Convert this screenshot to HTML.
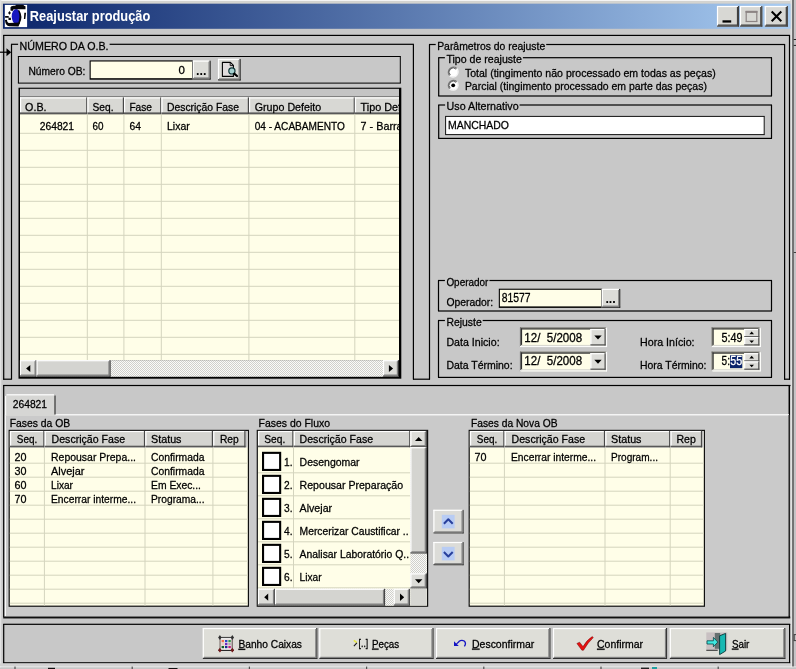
<!DOCTYPE html>
<html lang="pt-BR"><head><meta charset="utf-8"><title>Reajustar produção</title>
<style>html,body{margin:0;padding:0;background:#c8c8c8;overflow:hidden}body{width:796px;height:669px;font-family:"Liberation Sans", sans-serif}svg text{white-space:pre}</style>
</head><body>
<svg width="796" height="669" viewBox="0 0 796 669" font-family='"Liberation Sans", sans-serif' font-size="11" style="display:block;will-change:transform" stroke-linejoin="round">
<rect x="0" y="0" width="796" height="669" fill="#c8c8c8"/>
<rect x="0" y="0" width="796" height="1.2" fill="#f4f4f4"/>
<rect x="0" y="1.2" width="796" height="2.3" fill="#d4d4d0"/>
<rect x="790.4" y="0" width="5.6" height="669" fill="#c6c3c6"/>
<rect x="790.4" y="0" width="1.9" height="669" fill="#e2e2e2"/>
<rect x="792.25" y="0" width="1.5" height="667" fill="#585858"/>
<rect x="793.7" y="39" width="2.3" height="1" fill="#202020"/>
<rect x="793.7" y="44.9" width="2.3" height="1" fill="#202020"/>
<rect x="793.7" y="634.1" width="3.8" height="1" fill="#404040"/>
<rect x="793.7" y="640.1" width="3.8" height="1" fill="#404040"/>
<rect x="793.7" y="634.6" width="1" height="6" fill="#404040"/>
<rect x="796.5" y="634.6" width="1" height="6" fill="#404040"/>
<rect x="793.7" y="252" width="2.3" height="1" fill="#404040"/>
<defs><linearGradient id="tg" x1="0" x2="1" y1="0" y2="0"><stop offset="0" stop-color="#0a246a"/><stop offset="1" stop-color="#a8ccf2"/></linearGradient></defs>
<rect x="3" y="3.7" width="787.6" height="25.1" fill="url(#tg)"/>
<rect x="0" y="0" width="1.3" height="669" fill="#e2e2e2"/>
<rect x="4.8" y="4.9" width="22.3" height="22.2" fill="#ffffff"/>
<g transform="translate(4.7,4.9)"><ellipse cx="11.4" cy="11.6" rx="4.4" ry="7.4" fill="#1818c0"/><path d="M5.8 2.4 Q6.2 0.8 9 0.8 L10.6 0.8 L11.2 -0.2 L18.6 -0.2 L19.4 0.8 L20.8 1.4 L20.8 4.3 L9 4.3 L7.8 6.2 L5.8 5.6 Z" fill="#06060a"/><path d="M14.4 5 Q18.8 11.5 14.8 19 L12.8 19.4 Q16.4 12 13.4 5.6 Z" fill="#06060a"/><path d="M4.8 6.2 L6.2 8 L4.8 9.8 L3.4 8 Z M0.4 11 H4 V12.9 H0.4 Z M3.8 12.8 H6.2 V15.2 H3.8 Z M0.2 15 L2.2 14.8 Q2.4 17.8 4 18 L15.4 17.6 L13.8 21.6 L4.6 21.4 Q0.8 20.6 0.2 15 Z M19.6 7.8 L21.4 7.8 L20.6 14.2 L19.2 14.2 Z" fill="#06060a"/></g>
<text x="29.8" y="20.7" font-size="14" font-weight="bold" fill="#fff" textLength="120.5" lengthAdjust="spacingAndGlyphs">Reajustar produção</text>
<rect x="717" y="6" width="22" height="20.6" fill="#d8d8d4"/>
<rect x="717" y="5.9" width="22" height="1.2" fill="#ffffff"/>
<rect x="716.9" y="6" width="1.2" height="20.6" fill="#ffffff"/>
<rect x="717" y="25.5" width="22" height="1.2" fill="#404040"/>
<rect x="737.9" y="6" width="1.2" height="20.6" fill="#404040"/>
<rect x="718" y="24.5" width="20" height="1.2" fill="#404040"/>
<rect x="736.9" y="7" width="1.2" height="18.6" fill="#404040"/>
<rect x="740" y="6" width="22.3" height="20.6" fill="#d8d8d4"/>
<rect x="740" y="5.9" width="22.3" height="1.2" fill="#ffffff"/>
<rect x="739.9" y="6" width="1.2" height="20.6" fill="#ffffff"/>
<rect x="740" y="25.5" width="22.3" height="1.2" fill="#404040"/>
<rect x="761.2" y="6" width="1.2" height="20.6" fill="#404040"/>
<rect x="741" y="24.5" width="20.3" height="1.2" fill="#404040"/>
<rect x="760.2" y="7" width="1.2" height="18.6" fill="#404040"/>
<rect x="764.8" y="6" width="23" height="20.6" fill="#d8d8d4"/>
<rect x="764.8" y="5.9" width="23" height="1.2" fill="#ffffff"/>
<rect x="764.7" y="6" width="1.2" height="20.6" fill="#ffffff"/>
<rect x="764.8" y="25.5" width="23" height="1.2" fill="#404040"/>
<rect x="786.7" y="6" width="1.2" height="20.6" fill="#404040"/>
<rect x="765.8" y="24.5" width="21" height="1.2" fill="#404040"/>
<rect x="785.7" y="7" width="1.2" height="18.6" fill="#404040"/>
<rect x="722.5" y="20.3" width="8.7" height="2.3" fill="#000"/>
<rect x="745.6" y="10.9" width="11.8" height="1.2" fill="#8c8484"/>
<rect x="745.6" y="20.9" width="11.8" height="1.2" fill="#8c8484"/>
<rect x="745.6" y="11.5" width="1.2" height="10" fill="#8c8484"/>
<rect x="756.2" y="11.5" width="1.2" height="10" fill="#8c8484"/>
<rect x="745.6" y="10.9" width="11.8" height="2" fill="#8c8484"/>
<path d="M771.7 11.5 L781.3 21.3 M781.3 11.5 L771.7 21.3" stroke="#000" stroke-width="2" fill="none"/>
<rect x="3.2" y="34.8" width="786.8" height="1.2" fill="#000"/>
<rect x="3.1" y="35" width="1.2" height="344.7" fill="#000"/>
<rect x="788.9" y="35" width="1.2" height="344.7" fill="#000"/>
<rect x="3.2" y="378.6" width="8.5" height="1.2" fill="#000"/>
<rect x="413" y="378.6" width="17" height="1.2" fill="#000"/>
<rect x="784" y="378.6" width="6" height="1.2" fill="#000"/>
<rect x="11" y="43.7" width="7.1" height="1.2" fill="#000"/>
<rect x="109.6" y="43.7" width="304.3" height="1.2" fill="#000"/>
<rect x="10.9" y="44.3" width="1.2" height="335.2" fill="#000"/>
<rect x="412.8" y="44.3" width="1.2" height="335.2" fill="#000"/>
<text x="19.6" y="49.6" font-size="11.5" stroke="#000" stroke-width="0.28" textLength="89" lengthAdjust="spacingAndGlyphs">NÚMERO DA O.B.</text>
<rect x="0" y="51.6" width="8" height="1.2" fill="#000"/>
<path d="M6.5 48.2 L11.2 52.2 L6.5 56.2 Z" fill="#000"/>
<rect x="17.9" y="56" width="382.9" height="1" fill="#000"/>
<rect x="17.9" y="82.6" width="382.9" height="1" fill="#000"/>
<rect x="17.9" y="56.5" width="1" height="26.6" fill="#000"/>
<rect x="399.8" y="56.5" width="1" height="26.6" fill="#000"/>
<text x="28.4" y="74.6" font-size="11.5" stroke="#000" stroke-width="0.28" textLength="57" lengthAdjust="spacingAndGlyphs">Número OB:</text>
<rect x="89.6" y="60.4" width="103.6" height="19.3" fill="#000"/>
<rect x="90.7" y="61.5" width="101.4" height="16.7" fill="#fffee8"/>
<text x="184.8" y="74.2" font-size="11.5" stroke="#000" stroke-width="0.28" text-anchor="end">0</text>
<rect x="192.8" y="60.6" width="17.8" height="18.9" fill="#dcdcd8"/>
<rect x="192.8" y="60.5" width="17.8" height="1.2" fill="#ffffff"/>
<rect x="192.7" y="60.6" width="1.2" height="18.9" fill="#ffffff"/>
<rect x="192.8" y="78.4" width="17.8" height="1.2" fill="#202020"/>
<rect x="209.5" y="60.6" width="1.2" height="18.9" fill="#202020"/>
<rect x="193.8" y="77.4" width="15.8" height="1.2" fill="#808080"/>
<rect x="208.5" y="61.6" width="1.2" height="16.9" fill="#808080"/>
<text x="196" y="74.8" font-size="12" font-weight="bold" textLength="10.4" lengthAdjust="spacingAndGlyphs">...</text>
<rect x="218" y="58.9" width="22.6" height="21.5" fill="#dcdcd8"/>
<rect x="218" y="58.8" width="22.6" height="1.2" fill="#ffffff"/>
<rect x="217.9" y="58.9" width="1.2" height="21.5" fill="#ffffff"/>
<rect x="218" y="79.3" width="22.6" height="1.2" fill="#202020"/>
<rect x="239.5" y="58.9" width="1.2" height="21.5" fill="#202020"/>
<rect x="219" y="78.3" width="20.6" height="1.2" fill="#808080"/>
<rect x="238.5" y="59.9" width="1.2" height="19.5" fill="#808080"/>
<g><path d="M222.4 62.4 H230.4 L233.4 65.4 V76.4 H222.4 Z" fill="#e0dcdc" stroke="#000" stroke-width="1.1"/><path d="M230.2 62.6 V65.6 H233.2" fill="none" stroke="#000" stroke-width="0.9"/><circle cx="231.9" cy="70.9" r="3.1" fill="#a4d0d0" stroke="#103838" stroke-width="1.2"/><path d="M234.2 73.6 L237 76" stroke="#000" stroke-width="2.2" stroke-linecap="round"/></g>
<rect x="18.5" y="87.7" width="382.8" height="291" fill="#000"/>
<rect x="20" y="88.8" width="379" height="8.6" fill="#c4c4c4"/>
<rect x="20" y="96.6" width="379" height="1" fill="#202020"/>
<rect x="20" y="97.4" width="379" height="17" fill="#fffee8"/>
<rect x="20" y="114.4" width="379" height="246" fill="#fffee8"/>
<clipPath id="gc"><rect x="20" y="88" width="379" height="289"/></clipPath><g clip-path="url(#gc)">
<rect x="20" y="97.4" width="67.4" height="16.6" fill="#d8d8d4"/>
<rect x="20" y="97.3" width="67.4" height="1.2" fill="#ffffff"/>
<rect x="20" y="97.4" width="1.2" height="16.6" fill="#ffffff"/>
<rect x="20" y="112.4" width="67.4" height="1.6" fill="#585858"/>
<rect x="86.2" y="97.4" width="1.2" height="16.6" fill="#484848"/>
<rect x="87.4" y="97.4" width="36.6" height="16.6" fill="#d8d8d4"/>
<rect x="87.4" y="97.3" width="36.6" height="1.2" fill="#ffffff"/>
<rect x="87.4" y="97.4" width="1.2" height="16.6" fill="#ffffff"/>
<rect x="87.4" y="112.4" width="36.6" height="1.6" fill="#585858"/>
<rect x="122.8" y="97.4" width="1.2" height="16.6" fill="#484848"/>
<rect x="124" y="97.4" width="37.4" height="16.6" fill="#d8d8d4"/>
<rect x="124" y="97.3" width="37.4" height="1.2" fill="#ffffff"/>
<rect x="124" y="97.4" width="1.2" height="16.6" fill="#ffffff"/>
<rect x="124" y="112.4" width="37.4" height="1.6" fill="#585858"/>
<rect x="160.2" y="97.4" width="1.2" height="16.6" fill="#484848"/>
<rect x="161.4" y="97.4" width="87.6" height="16.6" fill="#d8d8d4"/>
<rect x="161.4" y="97.3" width="87.6" height="1.2" fill="#ffffff"/>
<rect x="161.4" y="97.4" width="1.2" height="16.6" fill="#ffffff"/>
<rect x="161.4" y="112.4" width="87.6" height="1.6" fill="#585858"/>
<rect x="247.8" y="97.4" width="1.2" height="16.6" fill="#484848"/>
<rect x="249" y="97.4" width="105.9" height="16.6" fill="#d8d8d4"/>
<rect x="249" y="97.3" width="105.9" height="1.2" fill="#ffffff"/>
<rect x="249" y="97.4" width="1.2" height="16.6" fill="#ffffff"/>
<rect x="249" y="112.4" width="105.9" height="1.6" fill="#585858"/>
<rect x="353.7" y="97.4" width="1.2" height="16.6" fill="#484848"/>
<rect x="354.9" y="97.4" width="54.1" height="16.6" fill="#d8d8d4"/>
<rect x="354.9" y="97.3" width="54.1" height="1.2" fill="#ffffff"/>
<rect x="354.9" y="97.4" width="1.2" height="16.6" fill="#ffffff"/>
<rect x="354.9" y="112.4" width="54.1" height="1.6" fill="#585858"/>
<rect x="407.8" y="97.4" width="1.2" height="16.6" fill="#484848"/>
<rect x="20" y="132.8" width="379" height="1" fill="#d4d4be"/>
<rect x="20" y="149.8" width="379" height="1" fill="#d4d4be"/>
<rect x="20" y="166.8" width="379" height="1" fill="#d4d4be"/>
<rect x="20" y="183.8" width="379" height="1" fill="#d4d4be"/>
<rect x="20" y="200.8" width="379" height="1" fill="#d4d4be"/>
<rect x="20" y="217.8" width="379" height="1" fill="#d4d4be"/>
<rect x="20" y="234.8" width="379" height="1" fill="#d4d4be"/>
<rect x="20" y="251.8" width="379" height="1" fill="#d4d4be"/>
<rect x="20" y="268.8" width="379" height="1" fill="#d4d4be"/>
<rect x="20" y="285.8" width="379" height="1" fill="#d4d4be"/>
<rect x="20" y="302.8" width="379" height="1" fill="#d4d4be"/>
<rect x="20" y="319.8" width="379" height="1" fill="#d4d4be"/>
<rect x="20" y="336.8" width="379" height="1" fill="#d4d4be"/>
<rect x="20" y="353.8" width="379" height="1" fill="#d4d4be"/>
<rect x="86.8" y="114.4" width="1" height="245.6" fill="#d4d4be"/>
<rect x="123.4" y="114.4" width="1" height="245.6" fill="#d4d4be"/>
<rect x="160.8" y="114.4" width="1" height="245.6" fill="#d4d4be"/>
<rect x="248.4" y="114.4" width="1" height="245.6" fill="#d4d4be"/>
<rect x="354.3" y="114.4" width="1" height="245.6" fill="#d4d4be"/>
<text x="25.1" y="110.8" font-size="11.5" stroke="#000" stroke-width="0.28" textLength="21.4" lengthAdjust="spacingAndGlyphs">O.B.</text>
<text x="92.5" y="110.8" font-size="11.5" stroke="#000" stroke-width="0.28" textLength="21" lengthAdjust="spacingAndGlyphs">Seq.</text>
<text x="129.4" y="110.8" font-size="11.5" stroke="#000" stroke-width="0.28" textLength="22.6" lengthAdjust="spacingAndGlyphs">Fase</text>
<text x="167" y="110.8" font-size="11.5" stroke="#000" stroke-width="0.28" textLength="72" lengthAdjust="spacingAndGlyphs">Descrição Fase</text>
<text x="254.7" y="110.8" font-size="11.5" stroke="#000" stroke-width="0.28" textLength="66.6" lengthAdjust="spacingAndGlyphs">Grupo Defeito</text>
<text x="360.6" y="110.8" font-size="11.5" stroke="#000" stroke-width="0.28" textLength="58" lengthAdjust="spacingAndGlyphs">Tipo Defeito</text>
<text x="39.7" y="130" font-size="11.5" stroke="#000" stroke-width="0.28" textLength="34.4" lengthAdjust="spacingAndGlyphs">264821</text>
<text x="92.5" y="130" font-size="11.5" stroke="#000" stroke-width="0.28" textLength="11" lengthAdjust="spacingAndGlyphs">60</text>
<text x="129.4" y="130" font-size="11.5" stroke="#000" stroke-width="0.28" textLength="11.5" lengthAdjust="spacingAndGlyphs">64</text>
<text x="167" y="130" font-size="11.5" stroke="#000" stroke-width="0.28" textLength="22.7" lengthAdjust="spacingAndGlyphs">Lixar</text>
<text x="254.7" y="130" font-size="11.5" stroke="#000" stroke-width="0.28" textLength="90.2" lengthAdjust="spacingAndGlyphs">04 - ACABAMENTO</text>
<text x="360.6" y="130" font-size="11.5" stroke="#000" stroke-width="0.28" textLength="72" lengthAdjust="spacingAndGlyphs">7 - Barramento</text>
</g>
<pattern id="dz" width="2" height="2" patternUnits="userSpaceOnUse"><rect width="2" height="2" fill="#fafaf8"/><rect width="1" height="1" fill="#d0d0cc"/><rect x="1" y="1" width="1" height="1" fill="#d0d0cc"/></pattern>
<rect x="20" y="360.2" width="379" height="16.6" fill="url(#dz)"/>
<rect x="20" y="360.2" width="16.6" height="16.4" fill="#dcdcd8"/>
<rect x="20" y="360.1" width="16.6" height="1.2" fill="#ffffff"/>
<rect x="19.9" y="360.2" width="1.2" height="16.4" fill="#ffffff"/>
<rect x="20" y="375.5" width="16.6" height="1.2" fill="#303030"/>
<rect x="35.5" y="360.2" width="1.2" height="16.4" fill="#303030"/>
<rect x="21" y="374.5" width="14.6" height="1.2" fill="#808080"/>
<rect x="34.5" y="361.2" width="1.2" height="14.4" fill="#808080"/>
<rect x="36.6" y="360.2" width="73.9" height="16.4" fill="#d4d4d0"/>
<rect x="36.6" y="360.1" width="73.9" height="1.2" fill="#ffffff"/>
<rect x="36.5" y="360.2" width="1.2" height="16.4" fill="#ffffff"/>
<rect x="36.6" y="375.5" width="73.9" height="1.2" fill="#303030"/>
<rect x="109.4" y="360.2" width="1.2" height="16.4" fill="#303030"/>
<rect x="37.6" y="374.5" width="71.9" height="1.2" fill="#808080"/>
<rect x="108.4" y="361.2" width="1.2" height="14.4" fill="#808080"/>
<rect x="383" y="360.2" width="15.9" height="16.4" fill="#dcdcd8"/>
<rect x="383" y="360.1" width="15.9" height="1.2" fill="#ffffff"/>
<rect x="382.9" y="360.2" width="1.2" height="16.4" fill="#ffffff"/>
<rect x="383" y="375.5" width="15.9" height="1.2" fill="#303030"/>
<rect x="397.8" y="360.2" width="1.2" height="16.4" fill="#303030"/>
<rect x="384" y="374.5" width="13.9" height="1.2" fill="#808080"/>
<rect x="396.8" y="361.2" width="1.2" height="14.4" fill="#808080"/>
<path d="M30.3 364.9 L26.1 368.5 L30.3 372.1 Z M388.9 364.9 L393.1 368.5 L388.9 372.1 Z" fill="#000"/>
<rect x="429" y="43.9" width="6.7" height="1.2" fill="#000"/>
<rect x="546.2" y="43.9" width="238.9" height="1.2" fill="#000"/>
<rect x="428.9" y="44.5" width="1.2" height="335" fill="#000"/>
<rect x="784" y="44.5" width="1.2" height="335" fill="#000"/>
<text x="437.2" y="49.8" font-size="11.5" stroke="#000" stroke-width="0.28" textLength="108" lengthAdjust="spacingAndGlyphs">Parâmetros do reajuste</text>
<rect x="438.2" y="57.1" width="6.7" height="1.2" fill="#000"/>
<rect x="522.9" y="57.1" width="249.1" height="1.2" fill="#000"/>
<rect x="438.1" y="57.7" width="1.2" height="38.3" fill="#000"/>
<rect x="770.9" y="57.7" width="1.2" height="38.3" fill="#000"/>
<rect x="438.2" y="95.4" width="333.8" height="1.2" fill="#000"/>
<text x="446.4" y="63" font-size="11.5" stroke="#000" stroke-width="0.28" textLength="75.5" lengthAdjust="spacingAndGlyphs">Tipo de reajuste</text>
<rect x="438.2" y="104.4" width="6.9" height="1.2" fill="#000"/>
<rect x="519.6" y="104.4" width="252.4" height="1.2" fill="#000"/>
<rect x="438.1" y="105" width="1.2" height="33.4" fill="#000"/>
<rect x="770.9" y="105" width="1.2" height="33.4" fill="#000"/>
<rect x="438.2" y="137.8" width="333.8" height="1.2" fill="#000"/>
<text x="446.6" y="109.6" font-size="11.5" stroke="#000" stroke-width="0.28" textLength="72" lengthAdjust="spacingAndGlyphs">Uso Alternativo</text>
<circle cx="453.2" cy="72.1" r="4.6" fill="#fff"/>
<path d="M449.6 75.7 A5.1 5.1 0 0 1 456.8 68.5" stroke="#787878" stroke-width="1.2" fill="none"/>
<path d="M450.3 75 A4.1 4.1 0 0 1 456.1 69.2" stroke="#383838" stroke-width="0.8" fill="none"/>
<path d="M449.6 75.7 A5.1 5.1 0 0 0 456.8 68.5" stroke="#f4f4f4" stroke-width="1.3" fill="none"/>
<circle cx="453.2" cy="85.3" r="4.6" fill="#fff"/>
<path d="M449.6 88.9 A5.1 5.1 0 0 1 456.8 81.7" stroke="#787878" stroke-width="1.2" fill="none"/>
<path d="M450.3 88.2 A4.1 4.1 0 0 1 456.1 82.4" stroke="#383838" stroke-width="0.8" fill="none"/>
<path d="M449.6 88.9 A5.1 5.1 0 0 0 456.8 81.7" stroke="#f4f4f4" stroke-width="1.3" fill="none"/>
<circle cx="453.2" cy="85.3" r="1.9" fill="#000"/>
<text x="464.9" y="76.6" font-size="11.5" stroke="#000" stroke-width="0.28" textLength="250.8" lengthAdjust="spacingAndGlyphs">Total (tingimento não processado em todas as peças)</text>
<text x="464.9" y="89.7" font-size="11.5" stroke="#000" stroke-width="0.28" textLength="242" lengthAdjust="spacingAndGlyphs">Parcial (tingimento processado em parte das peças)</text>
<rect x="445.2" y="116" width="319.3" height="19" fill="#ffffff"/>
<rect x="445.1" y="115.9" width="319.6" height="1" fill="#101010"/>
<rect x="445.1" y="134.1" width="319.6" height="1" fill="#101010"/>
<rect x="445.1" y="116.4" width="1" height="18.2" fill="#101010"/>
<rect x="763.7" y="116.4" width="1" height="18.2" fill="#101010"/>
<text x="448" y="128.7" font-size="11.5" stroke="#000" stroke-width="0.28" textLength="61" lengthAdjust="spacingAndGlyphs">MANCHADO</text>
<rect x="438" y="279.9" width="6.9" height="1.2" fill="#000"/>
<rect x="489.4" y="279.9" width="282.6" height="1.2" fill="#000"/>
<rect x="437.9" y="280.5" width="1.2" height="30.5" fill="#000"/>
<rect x="770.9" y="280.5" width="1.2" height="30.5" fill="#000"/>
<rect x="438" y="310.4" width="334" height="1.2" fill="#000"/>
<text x="446.4" y="285.8" font-size="11.5" stroke="#000" stroke-width="0.28" textLength="42" lengthAdjust="spacingAndGlyphs">Operador</text>
<text x="446.4" y="305.8" font-size="11.5" stroke="#000" stroke-width="0.28" textLength="46.8" lengthAdjust="spacingAndGlyphs">Operador:</text>
<rect x="498.8" y="288.7" width="103.6" height="19.2" fill="#000"/>
<rect x="499.9" y="289.8" width="101.4" height="16.6" fill="#fffee8"/>
<text x="501.7" y="301.9" font-size="12" stroke="#000" stroke-width="0.28" textLength="28.8" lengthAdjust="spacingAndGlyphs">81577</text>
<rect x="601.8" y="288.9" width="18.4" height="18.8" fill="#dcdcd8"/>
<rect x="601.8" y="288.8" width="18.4" height="1.2" fill="#ffffff"/>
<rect x="601.7" y="288.9" width="1.2" height="18.8" fill="#ffffff"/>
<rect x="601.8" y="306.6" width="18.4" height="1.2" fill="#202020"/>
<rect x="619.1" y="288.9" width="1.2" height="18.8" fill="#202020"/>
<rect x="602.8" y="305.6" width="16.4" height="1.2" fill="#808080"/>
<rect x="618.1" y="289.9" width="1.2" height="16.8" fill="#808080"/>
<text x="605.4" y="303.2" font-size="12" font-weight="bold" textLength="10.4" lengthAdjust="spacingAndGlyphs">...</text>
<rect x="438" y="319.9" width="6.9" height="1.2" fill="#000"/>
<rect x="482.7" y="319.9" width="289.3" height="1.2" fill="#000"/>
<rect x="437.9" y="320.5" width="1.2" height="56.9" fill="#000"/>
<rect x="770.9" y="320.5" width="1.2" height="56.9" fill="#000"/>
<rect x="438" y="376.8" width="334" height="1.2" fill="#000"/>
<text x="446.4" y="325.8" font-size="11.5" stroke="#000" stroke-width="0.28" textLength="35.3" lengthAdjust="spacingAndGlyphs">Rejuste</text>
<text x="446.4" y="345.8" font-size="11.5" stroke="#000" stroke-width="0.28" textLength="53.2" lengthAdjust="spacingAndGlyphs">Data Inicio:</text>
<text x="446.4" y="369" font-size="11.5" stroke="#000" stroke-width="0.28" textLength="66.2" lengthAdjust="spacingAndGlyphs">Data Término:</text>
<text x="640" y="345.7" font-size="11.5" stroke="#000" stroke-width="0.28" textLength="54.6" lengthAdjust="spacingAndGlyphs">Hora Início:</text>
<text x="640" y="369.2" font-size="11.5" stroke="#000" stroke-width="0.28" textLength="66.4" lengthAdjust="spacingAndGlyphs">Hora Término:</text>
<rect x="520" y="327.4" width="87" height="19.6" fill="#fffee8"/>
<rect x="520" y="327.3" width="87" height="1.2" fill="#707070"/>
<rect x="519.9" y="327.4" width="1.2" height="19.6" fill="#707070"/>
<rect x="521" y="328.3" width="85" height="1.2" fill="#303030"/>
<rect x="520.9" y="328.4" width="1.2" height="17.6" fill="#303030"/>
<rect x="520" y="345.9" width="87" height="1.2" fill="#ffffff"/>
<rect x="605.9" y="327.4" width="1.2" height="19.6" fill="#ffffff"/>
<rect x="521" y="344.9" width="85" height="1.2" fill="#d8d8d0"/>
<rect x="604.9" y="328.4" width="1.2" height="17.6" fill="#d8d8d0"/>
<text x="524.3" y="341.6" font-size="12" stroke="#000" stroke-width="0.28" textLength="57.8" lengthAdjust="spacingAndGlyphs" xml:space="preserve">12/  5/2008</text>
<rect x="590.4" y="329" width="15.2" height="16.4" fill="#dcdcd8"/>
<rect x="590.4" y="328.9" width="15.2" height="1.2" fill="#ffffff"/>
<rect x="590.3" y="329" width="1.2" height="16.4" fill="#ffffff"/>
<rect x="590.4" y="344.3" width="15.2" height="1.2" fill="#505050"/>
<rect x="604.5" y="329" width="1.2" height="16.4" fill="#505050"/>
<path d="M594.3 335.6 H601.7 L598 339.6 Z" fill="#000"/>
<rect x="711.6" y="327.4" width="49.1" height="19.6" fill="#fffee8"/>
<rect x="711.6" y="327.3" width="49.1" height="1.2" fill="#707070"/>
<rect x="711.5" y="327.4" width="1.2" height="19.6" fill="#707070"/>
<rect x="712.6" y="328.3" width="47.1" height="1.2" fill="#303030"/>
<rect x="712.5" y="328.4" width="1.2" height="17.6" fill="#303030"/>
<rect x="711.6" y="345.9" width="49.1" height="1.2" fill="#ffffff"/>
<rect x="759.6" y="327.4" width="1.2" height="19.6" fill="#ffffff"/>
<rect x="712.6" y="344.9" width="47.1" height="1.2" fill="#d8d8d0"/>
<rect x="758.6" y="328.4" width="1.2" height="17.6" fill="#d8d8d0"/>
<rect x="744.2" y="329" width="15.1" height="8.2" fill="#dcdcd8"/>
<rect x="744.2" y="328.9" width="15.1" height="1.2" fill="#ffffff"/>
<rect x="744.1" y="329" width="1.2" height="8.2" fill="#ffffff"/>
<rect x="744.2" y="336.1" width="15.1" height="1.2" fill="#505050"/>
<rect x="758.2" y="329" width="1.2" height="8.2" fill="#505050"/>
<rect x="744.2" y="337.2" width="15.1" height="8.2" fill="#dcdcd8"/>
<rect x="744.2" y="337.1" width="15.1" height="1.2" fill="#ffffff"/>
<rect x="744.1" y="337.2" width="1.2" height="8.2" fill="#ffffff"/>
<rect x="744.2" y="344.3" width="15.1" height="1.2" fill="#505050"/>
<rect x="758.2" y="337.2" width="1.2" height="8.2" fill="#505050"/>
<path d="M749.4 334.2 H754 L751.7 331.6 Z M749.4 340.4 H754 L751.7 343 Z" fill="#000"/>
<rect x="520" y="351.6" width="87" height="19.7" fill="#fffee8"/>
<rect x="520" y="351.5" width="87" height="1.2" fill="#707070"/>
<rect x="519.9" y="351.6" width="1.2" height="19.7" fill="#707070"/>
<rect x="521" y="352.5" width="85" height="1.2" fill="#303030"/>
<rect x="520.9" y="352.6" width="1.2" height="17.7" fill="#303030"/>
<rect x="520" y="370.2" width="87" height="1.2" fill="#ffffff"/>
<rect x="605.9" y="351.6" width="1.2" height="19.7" fill="#ffffff"/>
<rect x="521" y="369.2" width="85" height="1.2" fill="#d8d8d0"/>
<rect x="604.9" y="352.6" width="1.2" height="17.7" fill="#d8d8d0"/>
<text x="524.3" y="365.4" font-size="12" stroke="#000" stroke-width="0.28" textLength="57.8" lengthAdjust="spacingAndGlyphs" xml:space="preserve">12/  5/2008</text>
<rect x="590.4" y="353.2" width="15.2" height="16.5" fill="#dcdcd8"/>
<rect x="590.4" y="353.1" width="15.2" height="1.2" fill="#ffffff"/>
<rect x="590.3" y="353.2" width="1.2" height="16.5" fill="#ffffff"/>
<rect x="590.4" y="368.6" width="15.2" height="1.2" fill="#505050"/>
<rect x="604.5" y="353.2" width="1.2" height="16.5" fill="#505050"/>
<path d="M594.3 359.85 H601.7 L598 363.85 Z" fill="#000"/>
<rect x="711.6" y="351.6" width="49.1" height="19.7" fill="#fffee8"/>
<rect x="711.6" y="351.5" width="49.1" height="1.2" fill="#707070"/>
<rect x="711.5" y="351.6" width="1.2" height="19.7" fill="#707070"/>
<rect x="712.6" y="352.5" width="47.1" height="1.2" fill="#303030"/>
<rect x="712.5" y="352.6" width="1.2" height="17.7" fill="#303030"/>
<rect x="711.6" y="370.2" width="49.1" height="1.2" fill="#ffffff"/>
<rect x="759.6" y="351.6" width="1.2" height="19.7" fill="#ffffff"/>
<rect x="712.6" y="369.2" width="47.1" height="1.2" fill="#d8d8d0"/>
<rect x="758.6" y="352.6" width="1.2" height="17.7" fill="#d8d8d0"/>
<rect x="744.2" y="353.2" width="15.1" height="8.25" fill="#dcdcd8"/>
<rect x="744.2" y="353.1" width="15.1" height="1.2" fill="#ffffff"/>
<rect x="744.1" y="353.2" width="1.2" height="8.25" fill="#ffffff"/>
<rect x="744.2" y="360.35" width="15.1" height="1.2" fill="#505050"/>
<rect x="758.2" y="353.2" width="1.2" height="8.25" fill="#505050"/>
<rect x="744.2" y="361.45" width="15.1" height="8.25" fill="#dcdcd8"/>
<rect x="744.2" y="361.35" width="15.1" height="1.2" fill="#ffffff"/>
<rect x="744.1" y="361.45" width="1.2" height="8.25" fill="#ffffff"/>
<rect x="744.2" y="368.6" width="15.1" height="1.2" fill="#505050"/>
<rect x="758.2" y="361.45" width="1.2" height="8.25" fill="#505050"/>
<path d="M749.4 358.45 H754 L751.7 355.85 Z M749.4 364.65 H754 L751.7 367.25 Z" fill="#000"/>
<text x="721.6" y="341.6" font-size="12" stroke="#000" stroke-width="0.28" textLength="21" lengthAdjust="spacingAndGlyphs">5:49</text>
<text x="721.6" y="365.4" font-size="12" stroke="#000" stroke-width="0.28" textLength="8.4" lengthAdjust="spacingAndGlyphs">5:</text>
<rect x="730" y="355.3" width="12.3" height="12.9" fill="#0a246a"/>
<text x="730.2" y="365.4" font-size="12" fill="#fff" stroke="#fff" stroke-width="0.28" textLength="12" lengthAdjust="spacingAndGlyphs">55</text>
<rect x="3.2" y="384.9" width="787.3" height="1.2" fill="#000"/>
<rect x="3.1" y="385" width="1.2" height="232" fill="#000"/>
<rect x="788.55" y="385" width="1.5" height="233" fill="#000"/>
<rect x="3.2" y="616.55" width="787" height="1.9" fill="#101010"/>
<rect x="5" y="415" width="784" height="200.5" fill="#cacaca"/>
<rect x="5" y="414.2" width="784" height="1.2" fill="#ffffff"/>
<rect x="4.9" y="414.5" width="1" height="201.5" fill="#ffffff"/>
<rect x="788.2" y="415" width="1.2" height="201" fill="#606060"/>
<rect x="5.5" y="395" width="49.5" height="21" fill="#d6d6d4"/>
<rect x="6.5" y="394.2" width="47.5" height="1.2" fill="#ffffff"/>
<rect x="5.05" y="396" width="1.1" height="19.5" fill="#ffffff"/>
<rect x="54.35" y="395.5" width="1.3" height="19" fill="#404040"/>
<text x="12.7" y="407.6" font-size="11.5" stroke="#000" stroke-width="0.28" textLength="34.4" lengthAdjust="spacingAndGlyphs">264821</text>
<text x="9.7" y="426.7" font-size="11.5" stroke="#000" stroke-width="0.28" textLength="60.5" lengthAdjust="spacingAndGlyphs">Fases da OB</text>
<text x="258.5" y="426.7" font-size="11.5" stroke="#000" stroke-width="0.28" textLength="71.5" lengthAdjust="spacingAndGlyphs">Fases do Fluxo</text>
<text x="471" y="426.7" font-size="11.5" stroke="#000" stroke-width="0.28" textLength="86.5" lengthAdjust="spacingAndGlyphs">Fases da Nova OB</text>
<rect x="8.6" y="429.8" width="240.4" height="177" fill="#101010"/>
<rect x="9.8" y="431" width="238" height="174.6" fill="#fffee8"/>
<rect x="9.8" y="431" width="238" height="16.4" fill="#c8c8c8"/>
<rect x="10" y="431" width="34.5" height="16.3" fill="#d4d4d0"/>
<rect x="10" y="430.9" width="34.5" height="1.2" fill="#ffffff"/>
<rect x="10" y="431" width="1.2" height="16.3" fill="#ffffff"/>
<rect x="10" y="445.7" width="34.5" height="1.6" fill="#585858"/>
<rect x="43.3" y="431" width="1.2" height="16.3" fill="#484848"/>
<rect x="44.7" y="431" width="100.4" height="16.3" fill="#d4d4d0"/>
<rect x="44.7" y="430.9" width="100.4" height="1.2" fill="#ffffff"/>
<rect x="44.7" y="431" width="1.2" height="16.3" fill="#ffffff"/>
<rect x="44.7" y="445.7" width="100.4" height="1.6" fill="#585858"/>
<rect x="143.9" y="431" width="1.2" height="16.3" fill="#484848"/>
<rect x="145.3" y="431" width="67.7" height="16.3" fill="#d4d4d0"/>
<rect x="145.3" y="430.9" width="67.7" height="1.2" fill="#ffffff"/>
<rect x="145.3" y="431" width="1.2" height="16.3" fill="#ffffff"/>
<rect x="145.3" y="445.7" width="67.7" height="1.6" fill="#585858"/>
<rect x="211.8" y="431" width="1.2" height="16.3" fill="#484848"/>
<rect x="213.2" y="431" width="32.3" height="16.3" fill="#d4d4d0"/>
<rect x="213.2" y="430.9" width="32.3" height="1.2" fill="#ffffff"/>
<rect x="213.2" y="431" width="1.2" height="16.3" fill="#ffffff"/>
<rect x="213.2" y="445.7" width="32.3" height="1.6" fill="#585858"/>
<rect x="244.3" y="431" width="1.2" height="16.3" fill="#484848"/>
<rect x="9.8" y="462.7" width="238" height="1" fill="#d4d4be"/>
<rect x="9.8" y="476.7" width="238" height="1" fill="#d4d4be"/>
<rect x="9.8" y="490.7" width="238" height="1" fill="#d4d4be"/>
<rect x="9.8" y="504.7" width="238" height="1" fill="#d4d4be"/>
<rect x="9.8" y="518.7" width="238" height="1" fill="#d4d4be"/>
<rect x="9.8" y="532.7" width="238" height="1" fill="#d4d4be"/>
<rect x="9.8" y="546.7" width="238" height="1" fill="#d4d4be"/>
<rect x="9.8" y="560.7" width="238" height="1" fill="#d4d4be"/>
<rect x="9.8" y="574.7" width="238" height="1" fill="#d4d4be"/>
<rect x="9.8" y="588.7" width="238" height="1" fill="#d4d4be"/>
<rect x="9.8" y="602.7" width="238" height="1" fill="#d4d4be"/>
<rect x="43.9" y="447.5" width="1" height="158.1" fill="#d4d4be"/>
<rect x="144.5" y="447.5" width="1" height="158.1" fill="#d4d4be"/>
<rect x="212.4" y="447.5" width="1" height="158.1" fill="#d4d4be"/>
<text x="16.8" y="443" font-size="11.5" stroke="#000" stroke-width="0.28" textLength="20.4" lengthAdjust="spacingAndGlyphs">Seq.</text>
<text x="51.6" y="443" font-size="11.5" stroke="#000" stroke-width="0.28" textLength="73.5" lengthAdjust="spacingAndGlyphs">Descrição Fase</text>
<text x="151" y="443" font-size="11.5" stroke="#000" stroke-width="0.28" textLength="30.5" lengthAdjust="spacingAndGlyphs">Status</text>
<text x="219.9" y="443" font-size="11.5" stroke="#000" stroke-width="0.28" textLength="18.8" lengthAdjust="spacingAndGlyphs">Rep</text>
<text x="14.5" y="460.6" font-size="11.5" stroke="#000" stroke-width="0.28" textLength="12" lengthAdjust="spacingAndGlyphs">20</text>
<text x="51" y="460.6" font-size="11.5" stroke="#000" stroke-width="0.28" textLength="85" lengthAdjust="spacingAndGlyphs">Repousar Prepa...</text>
<text x="151" y="460.6" font-size="11.5" stroke="#000" stroke-width="0.28" textLength="53.5" lengthAdjust="spacingAndGlyphs">Confirmada</text>
<text x="14.5" y="474.6" font-size="11.5" stroke="#000" stroke-width="0.28" textLength="12" lengthAdjust="spacingAndGlyphs">30</text>
<text x="51" y="474.6" font-size="11.5" stroke="#000" stroke-width="0.28" textLength="33.5" lengthAdjust="spacingAndGlyphs">Alvejar</text>
<text x="151" y="474.6" font-size="11.5" stroke="#000" stroke-width="0.28" textLength="53.5" lengthAdjust="spacingAndGlyphs">Confirmada</text>
<text x="14.5" y="488.6" font-size="11.5" stroke="#000" stroke-width="0.28" textLength="12" lengthAdjust="spacingAndGlyphs">60</text>
<text x="51" y="488.6" font-size="11.5" stroke="#000" stroke-width="0.28" textLength="22" lengthAdjust="spacingAndGlyphs">Lixar</text>
<text x="151" y="488.6" font-size="11.5" stroke="#000" stroke-width="0.28" textLength="50" lengthAdjust="spacingAndGlyphs">Em Exec...</text>
<text x="14.5" y="502.6" font-size="11.5" stroke="#000" stroke-width="0.28" textLength="12" lengthAdjust="spacingAndGlyphs">70</text>
<text x="51" y="502.6" font-size="11.5" stroke="#000" stroke-width="0.28" textLength="85" lengthAdjust="spacingAndGlyphs">Encerrar interme...</text>
<text x="151" y="502.6" font-size="11.5" stroke="#000" stroke-width="0.28" textLength="53.5" lengthAdjust="spacingAndGlyphs">Programa...</text>
<rect x="468.6" y="429.8" width="236.4" height="177" fill="#101010"/>
<rect x="469.8" y="431" width="234" height="174.6" fill="#fffee8"/>
<rect x="469.8" y="431" width="234" height="16.4" fill="#c8c8c8"/>
<rect x="470" y="431" width="34.5" height="16.3" fill="#d4d4d0"/>
<rect x="470" y="430.9" width="34.5" height="1.2" fill="#ffffff"/>
<rect x="470" y="431" width="1.2" height="16.3" fill="#ffffff"/>
<rect x="470" y="445.7" width="34.5" height="1.6" fill="#585858"/>
<rect x="503.3" y="431" width="1.2" height="16.3" fill="#484848"/>
<rect x="504.7" y="431" width="100.4" height="16.3" fill="#d4d4d0"/>
<rect x="504.7" y="430.9" width="100.4" height="1.2" fill="#ffffff"/>
<rect x="504.7" y="431" width="1.2" height="16.3" fill="#ffffff"/>
<rect x="504.7" y="445.7" width="100.4" height="1.6" fill="#585858"/>
<rect x="603.9" y="431" width="1.2" height="16.3" fill="#484848"/>
<rect x="605.3" y="431" width="65" height="16.3" fill="#d4d4d0"/>
<rect x="605.3" y="430.9" width="65" height="1.2" fill="#ffffff"/>
<rect x="605.3" y="431" width="1.2" height="16.3" fill="#ffffff"/>
<rect x="605.3" y="445.7" width="65" height="1.6" fill="#585858"/>
<rect x="669.1" y="431" width="1.2" height="16.3" fill="#484848"/>
<rect x="670.5" y="431" width="31.6" height="16.3" fill="#d4d4d0"/>
<rect x="670.5" y="430.9" width="31.6" height="1.2" fill="#ffffff"/>
<rect x="670.5" y="431" width="1.2" height="16.3" fill="#ffffff"/>
<rect x="670.5" y="445.7" width="31.6" height="1.6" fill="#585858"/>
<rect x="700.9" y="431" width="1.2" height="16.3" fill="#484848"/>
<rect x="469.8" y="462.7" width="234" height="1" fill="#d4d4be"/>
<rect x="469.8" y="476.7" width="234" height="1" fill="#d4d4be"/>
<rect x="469.8" y="490.7" width="234" height="1" fill="#d4d4be"/>
<rect x="469.8" y="504.7" width="234" height="1" fill="#d4d4be"/>
<rect x="469.8" y="518.7" width="234" height="1" fill="#d4d4be"/>
<rect x="469.8" y="532.7" width="234" height="1" fill="#d4d4be"/>
<rect x="469.8" y="546.7" width="234" height="1" fill="#d4d4be"/>
<rect x="469.8" y="560.7" width="234" height="1" fill="#d4d4be"/>
<rect x="469.8" y="574.7" width="234" height="1" fill="#d4d4be"/>
<rect x="469.8" y="588.7" width="234" height="1" fill="#d4d4be"/>
<rect x="469.8" y="602.7" width="234" height="1" fill="#d4d4be"/>
<rect x="503.9" y="447.5" width="1" height="158.1" fill="#d4d4be"/>
<rect x="604.5" y="447.5" width="1" height="158.1" fill="#d4d4be"/>
<rect x="669.7" y="447.5" width="1" height="158.1" fill="#d4d4be"/>
<text x="476.8" y="443" font-size="11.5" stroke="#000" stroke-width="0.28" textLength="20.4" lengthAdjust="spacingAndGlyphs">Seq.</text>
<text x="511.6" y="443" font-size="11.5" stroke="#000" stroke-width="0.28" textLength="73.5" lengthAdjust="spacingAndGlyphs">Descrição Fase</text>
<text x="611" y="443" font-size="11.5" stroke="#000" stroke-width="0.28" textLength="30.5" lengthAdjust="spacingAndGlyphs">Status</text>
<text x="676.4" y="443" font-size="11.5" stroke="#000" stroke-width="0.28" textLength="19.4" lengthAdjust="spacingAndGlyphs">Rep</text>
<text x="474.5" y="460.6" font-size="11.5" stroke="#000" stroke-width="0.28" textLength="12" lengthAdjust="spacingAndGlyphs">70</text>
<text x="511" y="460.6" font-size="11.5" stroke="#000" stroke-width="0.28" textLength="85" lengthAdjust="spacingAndGlyphs">Encerrar interme...</text>
<text x="611" y="460.6" font-size="11.5" stroke="#000" stroke-width="0.28" textLength="47" lengthAdjust="spacingAndGlyphs">Program...</text>
<rect x="256.7" y="429.8" width="171.5" height="177" fill="#101010"/>
<rect x="257.9" y="431" width="169.1" height="174.6" fill="#fffee8"/>
<rect x="258" y="431" width="35.5" height="16.2" fill="#d4d4d0"/>
<rect x="258" y="430.9" width="35.5" height="1.2" fill="#ffffff"/>
<rect x="258" y="431" width="1.2" height="16.2" fill="#ffffff"/>
<rect x="258" y="445.6" width="35.5" height="1.6" fill="#585858"/>
<rect x="292.3" y="431" width="1.2" height="16.2" fill="#484848"/>
<rect x="293.8" y="431" width="116.6" height="16.2" fill="#d4d4d0"/>
<rect x="293.8" y="430.9" width="116.6" height="1.2" fill="#ffffff"/>
<rect x="293.8" y="431" width="1.2" height="16.2" fill="#ffffff"/>
<rect x="293.8" y="445.6" width="116.6" height="1.6" fill="#585858"/>
<rect x="409.2" y="431" width="1.2" height="16.2" fill="#484848"/>
<text x="264.3" y="443.3" font-size="11.5" stroke="#000" stroke-width="0.28" textLength="21" lengthAdjust="spacingAndGlyphs">Seq.</text>
<text x="299.6" y="443.3" font-size="11.5" stroke="#000" stroke-width="0.28" textLength="73.5" lengthAdjust="spacingAndGlyphs">Descrição Fase</text>
<rect x="258" y="472.3" width="152.4" height="1" fill="#d4d4be"/>
<rect x="262" y="451.8" width="19.2" height="19.2" fill="#000"/>
<rect x="264.1" y="453.9" width="15" height="15" fill="#fff"/>
<text x="284" y="466.3" font-size="11.5" stroke="#000" stroke-width="0.28" textLength="8.5" lengthAdjust="spacingAndGlyphs">1.</text>
<text x="299.6" y="466.3" font-size="11.5" stroke="#000" stroke-width="0.28" textLength="60" lengthAdjust="spacingAndGlyphs">Desengomar</text>
<rect x="258" y="495.3" width="152.4" height="1" fill="#d4d4be"/>
<rect x="262" y="474.8" width="19.2" height="19.2" fill="#000"/>
<rect x="264.1" y="476.9" width="15" height="15" fill="#fff"/>
<text x="284" y="489.3" font-size="11.5" stroke="#000" stroke-width="0.28" textLength="8.5" lengthAdjust="spacingAndGlyphs">2.</text>
<text x="299.6" y="489.3" font-size="11.5" stroke="#000" stroke-width="0.28" textLength="103.5" lengthAdjust="spacingAndGlyphs">Repousar Preparação</text>
<rect x="258" y="518.3" width="152.4" height="1" fill="#d4d4be"/>
<rect x="262" y="497.8" width="19.2" height="19.2" fill="#000"/>
<rect x="264.1" y="499.9" width="15" height="15" fill="#fff"/>
<text x="284" y="512.3" font-size="11.5" stroke="#000" stroke-width="0.28" textLength="8.5" lengthAdjust="spacingAndGlyphs">3.</text>
<text x="299.6" y="512.3" font-size="11.5" stroke="#000" stroke-width="0.28" textLength="32.5" lengthAdjust="spacingAndGlyphs">Alvejar</text>
<rect x="258" y="541.3" width="152.4" height="1" fill="#d4d4be"/>
<rect x="262" y="520.8" width="19.2" height="19.2" fill="#000"/>
<rect x="264.1" y="522.9" width="15" height="15" fill="#fff"/>
<text x="284" y="535.3" font-size="11.5" stroke="#000" stroke-width="0.28" textLength="8.5" lengthAdjust="spacingAndGlyphs">4.</text>
<text x="299.6" y="535.3" font-size="11.5" stroke="#000" stroke-width="0.28" textLength="109" lengthAdjust="spacingAndGlyphs">Mercerizar Caustificar ..</text>
<rect x="258" y="564.3" width="152.4" height="1" fill="#d4d4be"/>
<rect x="262" y="543.8" width="19.2" height="19.2" fill="#000"/>
<rect x="264.1" y="545.9" width="15" height="15" fill="#fff"/>
<text x="284" y="558.3" font-size="11.5" stroke="#000" stroke-width="0.28" textLength="8.5" lengthAdjust="spacingAndGlyphs">5.</text>
<text x="299.6" y="558.3" font-size="11.5" stroke="#000" stroke-width="0.28" textLength="109.5" lengthAdjust="spacingAndGlyphs">Analisar Laboratório Q..</text>
<rect x="258" y="587.3" width="152.4" height="1" fill="#d4d4be"/>
<rect x="262" y="566.8" width="19.2" height="19.2" fill="#000"/>
<rect x="264.1" y="568.9" width="15" height="15" fill="#fff"/>
<text x="284" y="581.3" font-size="11.5" stroke="#000" stroke-width="0.28" textLength="8.5" lengthAdjust="spacingAndGlyphs">6.</text>
<text x="299.6" y="581.3" font-size="11.5" stroke="#000" stroke-width="0.28" textLength="22" lengthAdjust="spacingAndGlyphs">Lixar</text>
<rect x="293" y="447.5" width="1" height="141" fill="#d4d4be"/>
<rect x="410.4" y="431" width="16.4" height="158" fill="url(#dz)"/>
<rect x="410.4" y="431" width="16.4" height="16.2" fill="#dcdcd8"/>
<rect x="410.4" y="430.9" width="16.4" height="1.2" fill="#ffffff"/>
<rect x="410.3" y="431" width="1.2" height="16.2" fill="#ffffff"/>
<rect x="410.4" y="446.1" width="16.4" height="1.2" fill="#404040"/>
<rect x="425.7" y="431" width="1.2" height="16.2" fill="#404040"/>
<rect x="411.4" y="445.1" width="14.4" height="1.2" fill="#808080"/>
<rect x="424.7" y="432" width="1.2" height="14.2" fill="#808080"/>
<rect x="410.4" y="447.2" width="16.4" height="106.2" fill="#d4d4d0"/>
<rect x="410.4" y="447.1" width="16.4" height="1.2" fill="#ffffff"/>
<rect x="410.3" y="447.2" width="1.2" height="106.2" fill="#ffffff"/>
<rect x="410.4" y="552.3" width="16.4" height="1.2" fill="#404040"/>
<rect x="425.7" y="447.2" width="1.2" height="106.2" fill="#404040"/>
<rect x="411.4" y="551.3" width="14.4" height="1.2" fill="#808080"/>
<rect x="424.7" y="448.2" width="1.2" height="104.2" fill="#808080"/>
<rect x="410.4" y="573.4" width="16.4" height="15" fill="#dcdcd8"/>
<rect x="410.4" y="573.3" width="16.4" height="1.2" fill="#ffffff"/>
<rect x="410.3" y="573.4" width="1.2" height="15" fill="#ffffff"/>
<rect x="410.4" y="587.3" width="16.4" height="1.2" fill="#404040"/>
<rect x="425.7" y="573.4" width="1.2" height="15" fill="#404040"/>
<rect x="411.4" y="586.3" width="14.4" height="1.2" fill="#808080"/>
<rect x="424.7" y="574.4" width="1.2" height="13" fill="#808080"/>
<path d="M415 441 H422.4 L418.7 437 Z M415 579.2 H422.4 L418.7 583.2 Z" fill="#000"/>
<rect x="258" y="588.8" width="152.4" height="16.8" fill="url(#dz)"/>
<rect x="410.4" y="588.6" width="16.4" height="17" fill="#d6d6d2"/>
<rect x="258" y="588.8" width="17" height="16.8" fill="#dcdcd8"/>
<rect x="258" y="588.7" width="17" height="1.2" fill="#ffffff"/>
<rect x="257.9" y="588.8" width="1.2" height="16.8" fill="#ffffff"/>
<rect x="258" y="604.5" width="17" height="1.2" fill="#404040"/>
<rect x="273.9" y="588.8" width="1.2" height="16.8" fill="#404040"/>
<rect x="259" y="603.5" width="15" height="1.2" fill="#808080"/>
<rect x="272.9" y="589.8" width="1.2" height="14.8" fill="#808080"/>
<rect x="275" y="588.8" width="110" height="16.8" fill="#d4d4d0"/>
<rect x="275" y="588.7" width="110" height="1.2" fill="#ffffff"/>
<rect x="274.9" y="588.8" width="1.2" height="16.8" fill="#ffffff"/>
<rect x="275" y="604.5" width="110" height="1.2" fill="#404040"/>
<rect x="383.9" y="588.8" width="1.2" height="16.8" fill="#404040"/>
<rect x="276" y="603.5" width="108" height="1.2" fill="#808080"/>
<rect x="382.9" y="589.8" width="1.2" height="14.8" fill="#808080"/>
<rect x="393.8" y="588.8" width="16" height="16.8" fill="#dcdcd8"/>
<rect x="393.8" y="588.7" width="16" height="1.2" fill="#ffffff"/>
<rect x="393.7" y="588.8" width="1.2" height="16.8" fill="#ffffff"/>
<rect x="393.8" y="604.5" width="16" height="1.2" fill="#404040"/>
<rect x="408.7" y="588.8" width="1.2" height="16.8" fill="#404040"/>
<rect x="394.8" y="603.5" width="14" height="1.2" fill="#808080"/>
<rect x="407.7" y="589.8" width="1.2" height="14.8" fill="#808080"/>
<path d="M268.2 593.6 L264.2 597.2 L268.2 600.8 Z M400 593.4 L404.2 597.2 L400 601 Z" fill="#000"/>
<rect x="433.4" y="509.8" width="30.2" height="23.6" fill="#dcdcd8"/>
<rect x="433.4" y="509.7" width="30.2" height="1.2" fill="#ffffff"/>
<rect x="433.3" y="509.8" width="1.2" height="23.6" fill="#ffffff"/>
<rect x="433.4" y="532.3" width="30.2" height="1.2" fill="#404040"/>
<rect x="462.5" y="509.8" width="1.2" height="23.6" fill="#404040"/>
<rect x="434.4" y="531.3" width="28.2" height="1.2" fill="#808080"/>
<rect x="461.5" y="510.8" width="1.2" height="21.6" fill="#808080"/>
<rect x="441.8" y="514.8" width="12.8" height="13.6" fill="#b8ccf4"/>
<path d="M443.9 523.8 L448.3 519.3 L452.7 523.8" stroke="#28409c" stroke-width="2" fill="none"/>
<rect x="433.4" y="542" width="30.2" height="23.2" fill="#dcdcd8"/>
<rect x="433.4" y="541.9" width="30.2" height="1.2" fill="#ffffff"/>
<rect x="433.3" y="542" width="1.2" height="23.2" fill="#ffffff"/>
<rect x="433.4" y="564.1" width="30.2" height="1.2" fill="#404040"/>
<rect x="462.5" y="542" width="1.2" height="23.2" fill="#404040"/>
<rect x="434.4" y="563.1" width="28.2" height="1.2" fill="#808080"/>
<rect x="461.5" y="543" width="1.2" height="21.2" fill="#808080"/>
<rect x="441.8" y="546.8" width="12.8" height="13.6" fill="#b8ccf4"/>
<path d="M443.9 552 L448.3 556.5 L452.7 552" stroke="#28409c" stroke-width="2" fill="none"/>
<rect x="3.2" y="623.7" width="787" height="1.2" fill="#000"/>
<rect x="3.1" y="624" width="1.2" height="39.2" fill="#000"/>
<rect x="789" y="624" width="1.2" height="39.2" fill="#000"/>
<rect x="3.2" y="662.2" width="787" height="1.2" fill="#000"/>
<rect x="202.8" y="628" width="114.5" height="30.9" fill="#deded8"/>
<rect x="202.8" y="627.9" width="114.5" height="1.2" fill="#ffffff"/>
<rect x="202.7" y="628" width="1.2" height="30.9" fill="#ffffff"/>
<rect x="202.8" y="657.8" width="114.5" height="1.2" fill="#303030"/>
<rect x="316.2" y="628" width="1.2" height="30.9" fill="#303030"/>
<rect x="203.8" y="656.8" width="112.5" height="1.2" fill="#808080"/>
<rect x="315.2" y="629" width="1.2" height="28.9" fill="#808080"/>
<rect x="319.3" y="628" width="114.2" height="30.9" fill="#deded8"/>
<rect x="319.3" y="627.9" width="114.2" height="1.2" fill="#ffffff"/>
<rect x="319.2" y="628" width="1.2" height="30.9" fill="#ffffff"/>
<rect x="319.3" y="657.8" width="114.2" height="1.2" fill="#303030"/>
<rect x="432.4" y="628" width="1.2" height="30.9" fill="#303030"/>
<rect x="320.3" y="656.8" width="112.2" height="1.2" fill="#808080"/>
<rect x="431.4" y="629" width="1.2" height="28.9" fill="#808080"/>
<rect x="436" y="628" width="114.4" height="30.9" fill="#deded8"/>
<rect x="436" y="627.9" width="114.4" height="1.2" fill="#ffffff"/>
<rect x="435.9" y="628" width="1.2" height="30.9" fill="#ffffff"/>
<rect x="436" y="657.8" width="114.4" height="1.2" fill="#303030"/>
<rect x="549.3" y="628" width="1.2" height="30.9" fill="#303030"/>
<rect x="437" y="656.8" width="112.4" height="1.2" fill="#808080"/>
<rect x="548.3" y="629" width="1.2" height="28.9" fill="#808080"/>
<rect x="553" y="628" width="114" height="30.9" fill="#deded8"/>
<rect x="553" y="627.9" width="114" height="1.2" fill="#ffffff"/>
<rect x="552.9" y="628" width="1.2" height="30.9" fill="#ffffff"/>
<rect x="553" y="657.8" width="114" height="1.2" fill="#303030"/>
<rect x="665.9" y="628" width="1.2" height="30.9" fill="#303030"/>
<rect x="554" y="656.8" width="112" height="1.2" fill="#808080"/>
<rect x="664.9" y="629" width="1.2" height="28.9" fill="#808080"/>
<rect x="669.8" y="628" width="115.5" height="30.9" fill="#deded8"/>
<rect x="669.8" y="627.9" width="115.5" height="1.2" fill="#ffffff"/>
<rect x="669.7" y="628" width="1.2" height="30.9" fill="#ffffff"/>
<rect x="669.8" y="657.8" width="115.5" height="1.2" fill="#303030"/>
<rect x="784.2" y="628" width="1.2" height="30.9" fill="#303030"/>
<rect x="670.8" y="656.8" width="113.5" height="1.2" fill="#808080"/>
<rect x="783.2" y="629" width="1.2" height="28.9" fill="#808080"/>
<text x="238.4" y="647.8" font-size="11" stroke="#000" stroke-width="0.28" textLength="63.6" lengthAdjust="spacingAndGlyphs"><tspan text-decoration="underline">B</tspan>anho Caixas</text>
<text x="372" y="647.6" font-size="11" stroke="#000" stroke-width="0.28" textLength="27.2" lengthAdjust="spacingAndGlyphs"><tspan text-decoration="underline">P</tspan>eças</text>
<text x="472" y="647.6" font-size="11" stroke="#000" stroke-width="0.28" textLength="62.3" lengthAdjust="spacingAndGlyphs"><tspan text-decoration="underline">D</tspan>esconfirmar</text>
<text x="597" y="647.7" font-size="11" stroke="#000" stroke-width="0.28" textLength="46" lengthAdjust="spacingAndGlyphs"><tspan text-decoration="underline">C</tspan>onfirmar</text>
<text x="731.9" y="647.6" font-size="11" stroke="#000" stroke-width="0.28" textLength="17.5" lengthAdjust="spacingAndGlyphs"><tspan text-decoration="underline">S</tspan>air</text>
<g><rect x="219.6" y="637.5" width="1.3" height="12.5" fill="#5a4a4a"/><rect x="231.4" y="637.5" width="1.3" height="12.5" fill="#5a4a4a"/><rect x="220.5" y="638.6" width="11" height="10" fill="#e6dede"/><rect x="218.6" y="636.9" width="15" height="1.3" fill="#484848"/><rect x="220.5" y="638.2" width="11" height="1" fill="#f4f4f4"/><rect x="218.4" y="649.6" width="15.4" height="1.4" fill="#282828"/><rect x="220.5" y="648.4" width="11" height="1.2" fill="#ffffff"/><path d="M219.9 635 L221.5 637.5 L219.9 640 L218.3 637.5 Z M232.3 635 L233.9 637.5 L232.3 640 L230.7 637.5 Z" fill="#303030"/><path d="M219.9 647.8 L221.7 650.2 L219.9 652.6 L218.1 650.2 Z M232.3 647.8 L234.1 650.2 L232.3 652.6 L230.5 650.2 Z" fill="#701818"/><rect x="221.6" y="640" width="2.4" height="2.2" fill="#f07050"/><rect x="225" y="640" width="2.4" height="2.2" fill="#2848c8"/><rect x="228.4" y="640" width="2.4" height="2.2" fill="#309848"/><rect x="221.6" y="643" width="2.4" height="2.2" fill="#f0d0c0"/><rect x="225" y="643" width="2.4" height="2.2" fill="#7028c0"/><rect x="228.4" y="643" width="2.4" height="2.2" fill="#b0a8b0"/><rect x="221.6" y="646" width="2.4" height="2.2" fill="#106028"/><rect x="225" y="646" width="2.4" height="2.2" fill="#182890"/><rect x="228.4" y="646" width="2.4" height="2.2" fill="#c01880"/></g>
<path d="M353.8 640.3 L356.8 642.6" stroke="#e8e840" stroke-width="1.5" fill="none"/><path d="M356.9 642.8 L353.9 646.2" stroke="#181818" stroke-width="1.1" fill="none"/>
<text x="358.6" y="646.6" font-size="11" stroke="#000" stroke-width="0.28" textLength="9.6" lengthAdjust="spacingAndGlyphs">[..]</text>
<path d="M454 641.2 L454 646.1 L458.8 646.1 L457 644.3 L459.6 641.9 L458.7 641 L456.2 643.4 Z" fill="#1414c4"/><path d="M458.8 641.6 Q461.5 639.4 464.2 641 Q466.6 643 464.4 646.4" stroke="#1414c4" stroke-width="1.3" fill="none"/>
<path d="M576.9 643.5 L579.6 642.2 L583 646.6 Q586.6 640.2 592.2 636.6 L593.3 637.5 Q588 642.5 583.5 650.2 L581.9 650.2 Z" fill="#e81010" stroke="#700808" stroke-width="0.5"/>
<g><rect x="706.3" y="632.4" width="21" height="17.8" fill="#c8c0c2"/><rect x="706.3" y="649.8" width="11.4" height="1" fill="#303030"/><rect x="714.8" y="633" width="5.4" height="15.8" fill="#667070"/><path d="M719.6 635.8 L725.6 633.4 L725.6 651 L719.6 654.6 Z" fill="#18b8b2" stroke="#083838" stroke-width="0.9"/><path d="M707 640.8 H713.4 V637.4 L717.8 642.1 L713.4 646.8 V644 H707 Z" fill="#40e8e0" stroke="#084848" stroke-width="0.8"/></g>
<rect x="0" y="663.4" width="790.4" height="3.2" fill="#d2d2d2"/>
<rect x="0" y="666.5" width="796" height="1" fill="#f4f4f4"/>
<rect x="0" y="667.5" width="796" height="1.5" fill="#c6c6c6"/>
<rect x="14.4" y="666.6" width="1.2" height="2.4" fill="#505050"/>
<rect x="131.6" y="666.6" width="1.2" height="2.4" fill="#505050"/>
<rect x="248.8" y="666.6" width="1.2" height="2.4" fill="#505050"/>
<rect x="366" y="666.6" width="1.2" height="2.4" fill="#505050"/>
<rect x="483.2" y="666.6" width="1.2" height="2.4" fill="#505050"/>
<rect x="600.4" y="666.6" width="1.2" height="2.4" fill="#505050"/>
<rect x="717.6" y="666.6" width="1.2" height="2.4" fill="#505050"/>
<rect x="48" y="667.8" width="7" height="1.2" fill="#101010"/>
<rect x="168.5" y="668" width="9" height="1" fill="#101010"/>
<rect x="641" y="667.6" width="8" height="1.4" fill="#202020"/>
<rect x="652" y="667" width="5" height="2" fill="#20a0a0"/>
</svg>
</body></html>
